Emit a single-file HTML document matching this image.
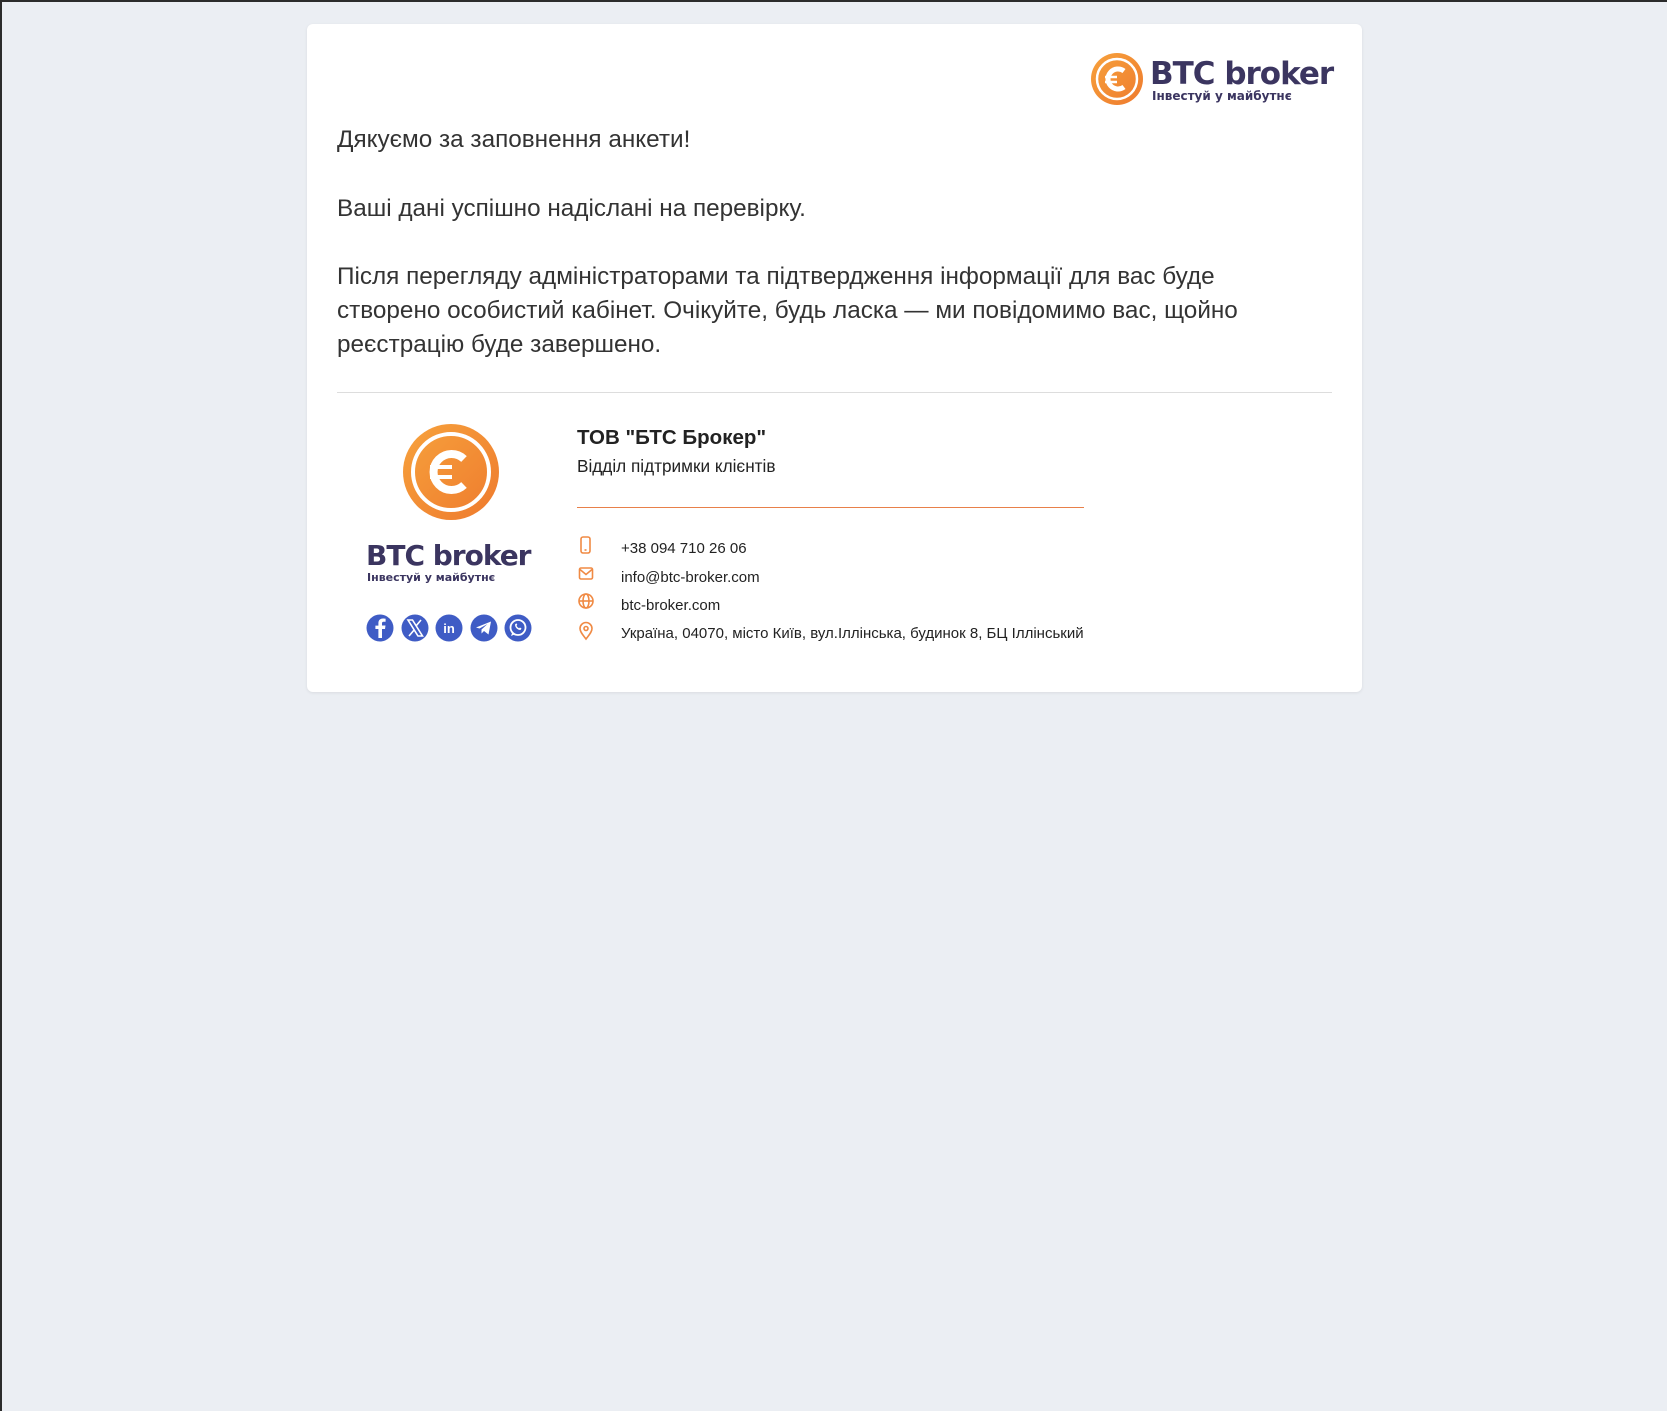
<!DOCTYPE html>
<html><head><meta charset="utf-8"><style>
html,body{margin:0;padding:0}
body{width:1665px;height:1409px;background:#ebeef3;border-top:2px solid #2b2b2b;border-left:2px solid #2b2b2b;position:relative;overflow:hidden;font-family:"Liberation Sans",sans-serif}
.card{position:absolute;left:305px;top:22px;width:1055px;height:668px;background:#fff;border-radius:6px;box-shadow:0 1px 3px rgba(0,0,0,.08)}
.abs{position:absolute;white-space:nowrap}
.p{left:30px;font-size:24.3px;color:#333;line-height:34px}
.brand{font-family:"DejaVu Sans","Liberation Sans",sans-serif;font-weight:bold;color:#3b3560;letter-spacing:-1px}
.tag{font-family:"DejaVu Sans",sans-serif;font-weight:bold;color:#3b3560}
.ct{left:314px;font-size:15px;color:#222}
</style></head><body>
<div class="card">
  <svg class="abs" style="left:783px;top:28px" width="54" height="54" viewBox="0 0 54 54">
    <defs><linearGradient id="g1" x1="0" y1="0" x2="1" y2="1"><stop offset="0" stop-color="#f7a23c"/><stop offset="1" stop-color="#ee7a2e"/></linearGradient></defs>
    <circle cx="27" cy="27" r="26" fill="url(#g1)"/><circle cx="27" cy="27" r="20" fill="none" stroke="#fff" stroke-width="2.5"/>
    <path d="M34 19 A10 10 0 1 0 34 35" fill="none" stroke="#fff" stroke-width="5"/>
    <path d="M15 25h12M15 30h12" stroke="#fff" stroke-width="2.5"/>
  </svg>
  <div class="abs brand" style="left:843px;top:32px;font-size:31px">BTC broker</div>
  <div class="abs tag" style="left:845px;top:65px;font-size:12px">Інвестуй у майбутнє</div>

  <div class="abs p" style="top:99px">Дякуємо за заповнення анкети!</div>
  <div class="abs p" style="top:168px">Ваші дані успішно надіслані на перевірку.</div>
  <div class="abs p" style="top:236px;white-space:normal;width:920px">Після перегляду адміністраторами та підтвердження інформації для вас буде створено особистий кабінет. Очікуйте, будь ласка — ми повідомимо вас, щойно реєстрацію буде завершено.</div>
  <div class="abs" style="left:30px;top:368px;width:995px;height:1px;background:#ddd"></div>

  <svg class="abs" style="left:95px;top:399px" width="98" height="98" viewBox="0 0 98 98">
    <defs><linearGradient id="g2" x1="0" y1="0" x2="1" y2="1"><stop offset="0" stop-color="#f7a23c"/><stop offset="1" stop-color="#ee7a2e"/></linearGradient></defs>
    <circle cx="49" cy="49" r="48" fill="url(#g2)"/><circle cx="49" cy="49" r="38" fill="none" stroke="#fff" stroke-width="4"/>
    <path d="M62 36 A18 18 0 1 0 62 62" fill="none" stroke="#fff" stroke-width="8"/>
    <path d="M28 44h22M28 54h22" stroke="#fff" stroke-width="4"/>
  </svg>
  <div class="abs brand" style="left:59px;top:515px;font-size:28px">BTC broker</div>
  <div class="abs tag" style="left:60px;top:547px;font-size:11px">Інвестуй у майбутнє</div>
  <svg class="abs" style="left:58px;top:589px" width="170" height="30" viewBox="0 0 170 30">
    <g fill="#3f5cc5"><circle cx="15" cy="15" r="13.5"/><circle cx="50" cy="15" r="13.5"/><circle cx="84" cy="15" r="13.5"/><circle cx="119" cy="15" r="13.5"/><circle cx="153" cy="15" r="13.5"/></g>
    <path d="M17 25v-9h3l.5-3.5H17v-2c0-1 .3-1.7 1.8-1.7h1.8V5.7c-.3 0-1.4-.2-2.7-.2-2.7 0-4.5 1.6-4.5 4.6v2.5h-3V16h3v9z" fill="#fff"/>
    <path d="M43 7h4.5l10 16h-4.5zM44 23l5.5-6.5M51 13l5-6" stroke="#fff" stroke-width="1.6" fill="none"/>
    <text x="84" y="20" text-anchor="middle" fill="#fff" font-family="Liberation Sans" font-weight="bold" font-size="13">in</text>
    <path d="M111 14.5l15-6-2.5 13-4.5-3.5-2.5 2.5v-4l6-5.5-8 4.5z" fill="#fff"/>
    <circle cx="153" cy="14.5" r="7.5" fill="none" stroke="#fff" stroke-width="1.8"/><path d="M146 23l1.5-4 3 2z" fill="#fff"/>
    <path d="M150 11.5c0 3 2.5 5.5 5.5 5.5l1-1.5-1.5-1-1 .8c-1-.5-2-1.5-2.5-2.5l.8-1-1-1.5z" fill="#fff"/>
  </svg>

  <div class="abs" style="left:270px;top:402px;font-size:20.5px;font-weight:bold;color:#222">ТОВ "БТС Брокер"</div>
  <div class="abs" style="left:270px;top:432px;font-size:17.2px;color:#222">Відділ підтримки клієнтів</div>
  <div class="abs" style="left:270px;top:483px;width:507px;height:1px;background:#e8804a"></div>

  <svg class="abs" style="left:270px;top:511px" width="20" height="118" viewBox="0 0 20 118" fill="none" stroke="#f08a44" stroke-width="1.6">
    <rect x="4" y="2" width="9" height="16" rx="2"/><path d="M7.5 15h2"/>
    <rect x="2.5" y="33" width="13" height="11" rx="1.5"/><path d="M3 34.5l6 5 6-5"/>
    <circle cx="9" cy="66" r="7"/><ellipse cx="9" cy="66" rx="3" ry="7"/><path d="M2 66h14"/>
    <path d="M9 104c-3-4-6-7-6-10.5a6 6 0 0 1 12 0c0 3.5-3 6.5-6 10.5z"/><circle cx="9" cy="93.5" r="2"/>
  </svg>
  <div class="abs ct" style="top:516px">+38 094 710 26 06</div>
  <div class="abs ct" style="top:545px">info@btc-broker.com</div>
  <div class="abs ct" style="top:573px">btc-broker.com</div>
  <div class="abs ct" style="top:601px">Україна, 04070, місто Київ, вул.Іллінська, будинок 8, БЦ Іллінський</div>
</div>
</body></html>
